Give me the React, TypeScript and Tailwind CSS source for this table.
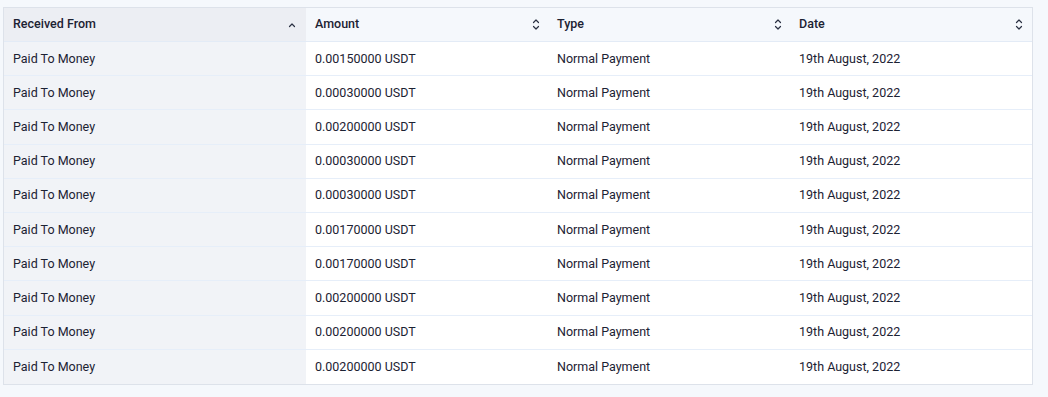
// Transactions table — received payments list

const ROWS = [
  '0.00150000',
  '0.00030000',
  '0.00200000',
  '0.00030000',
  '0.00030000',
  '0.00170000',
  '0.00170000',
  '0.00200000',
  '0.00200000',
  '0.00200000',
]

function SortUp() {
  return (
    <svg width="8" height="6" viewBox="0 0 8 6" fill="none" className="shrink-0">
      <path d="M1.5 4.5L4 2L6.5 4.5" stroke="#2a3042" strokeWidth="1.2" strokeLinecap="round" strokeLinejoin="round" />
    </svg>
  )
}

function SortBoth() {
  return (
    <svg width="8" height="13" viewBox="0 0 8 13" fill="none" className="shrink-0">
      <path d="M1.5 4.5L4 2L6.5 4.5" stroke="#2a3042" strokeWidth="1.2" strokeLinecap="round" strokeLinejoin="round" />
      <path d="M1.5 8.5L4 11L6.5 8.5" stroke="#2a3042" strokeWidth="1.2" strokeLinecap="round" strokeLinejoin="round" />
    </svg>
  )
}

export default function App() {
  return (
    <div className="min-h-[397px] w-[1048px] bg-[#f5f8fc] pt-[7px] pl-[3px] font-['Roboto',sans-serif] text-[12.5px] text-[#1c2233]">
      <div className="w-[1030px] border border-[#dde2ea] bg-white">
        <div className="flex h-[34px] border-b border-[#e3ebf6]">
          <div className="flex w-[302px] items-center justify-between bg-[#eceef3] pl-[9px] pr-[10px] font-medium">
            <span>Received From</span>
            <SortUp />
          </div>
          <div className="flex w-[242px] items-center justify-between bg-[#f5f8fc] pl-[9px] pr-[8px] font-medium">
            <span>Amount</span>
            <SortBoth />
          </div>
          <div className="flex w-[242px] items-center justify-between bg-[#f5f8fc] pl-[9px] pr-[8px] font-medium">
            <span>Type</span>
            <SortBoth />
          </div>
          <div className="flex flex-1 items-center justify-between bg-[#f5f8fc] pl-[9px] pr-[9px] font-medium">
            <span>Date</span>
            <SortBoth />
          </div>
        </div>
        {ROWS.map((amount, i) => (
          <div
            key={i}
            className={`flex h-[34.2px] ${i < ROWS.length - 1 ? 'border-b border-[#e6eef9]' : ''}`}
          >
            <div className="flex w-[302px] items-center bg-[#f1f3f7] pl-[9px] pt-px">Paid To Money</div>
            <div className="flex w-[242px] items-center pl-[9px] pt-px">{amount} USDT</div>
            <div className="flex w-[242px] items-center pl-[9px] pt-px">Normal Payment</div>
            <div className="flex flex-1 items-center pl-[9px] pt-px">19th August, 2022</div>
          </div>
        ))}
      </div>
    </div>
  )
}
